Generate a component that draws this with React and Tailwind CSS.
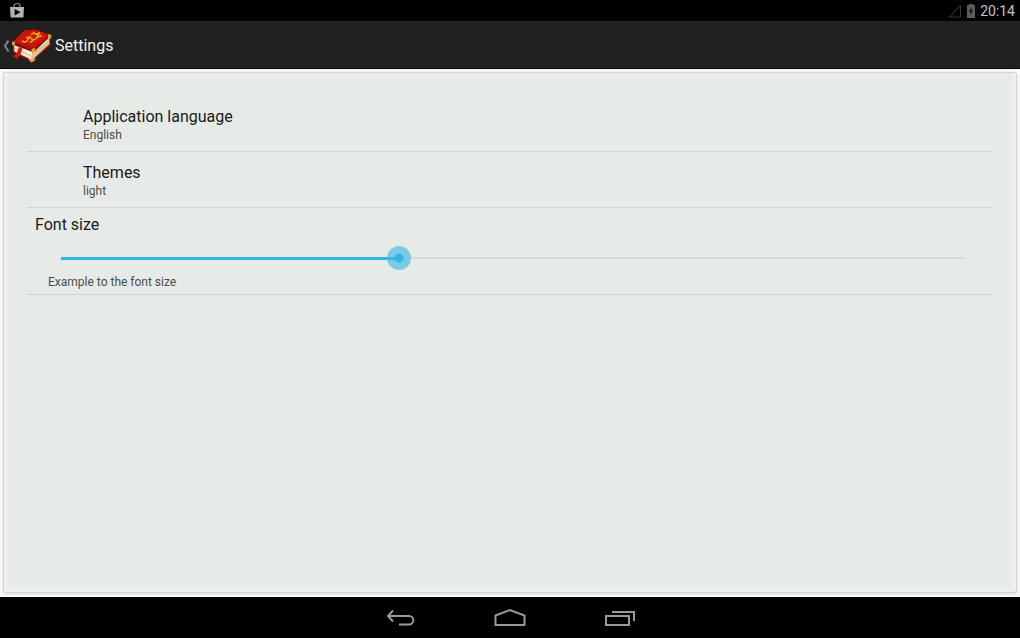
import React, { useState } from 'react';

const PREFERENCES = [
  { title: 'Application language', value: 'English' },
  { title: 'Themes', value: 'light' },
];

const FONT_STEPS = 8;

function StatusBar() {
  return (
    <div className="flex h-[21px] items-center justify-between bg-black pl-2 pr-[5px]">
      <svg width="18" height="18" viewBox="0 0 18 18" aria-hidden="true">
        <path d="M6 6V4.2C6 2.6 7.2 1.500 9 1.500s3 1.100 3 2.700V6" fill="none" stroke="#8a8a8a" strokeWidth="1.2" />
        <path d="M2 5h14l-.6 10.500H2.600z" fill="#b4b4b4" />
        <path d="M6.600 7v6.600l6-3.300z" fill="#000" />
      </svg>
      <div className="flex items-center gap-1">
        <svg width="14" height="14" viewBox="0 0 14 14" aria-hidden="true">
          <path d="M1.500 13L12.500 1.500V13z" fill="none" stroke="#3a3a3a" />
        </svg>
        <svg width="10" height="14" viewBox="0 0 10 14" aria-hidden="true">
          <path d="M3 0h4v1h2v13H1V1h2z" fill="#5a5f5c" />
          <path d="M6.400 3L2.600 7.600h2.200L3.600 11.600l4-5H5.400z" fill="#111" />
        </svg>
        <span className="text-sm leading-5 text-[#c4c4c4]">20:14</span>
      </div>
    </div>
  );
}

function BookIcon() {
  return (
    <svg width="40" height="34" viewBox="0 0 40 34" aria-hidden="true">
      {/* back cover */}
      <path d="M1 15v8.500L19.500 32.500 38.500 16.500V14z" fill="#a50f0a" />
      {/* pages */}
      <path d="M2 15.500l18.500 7.500-.5 8L2.500 22.500z" fill="#f6ecd2" />
      <path d="M20.500 22L37.500 8.500v6.500L20 31z" fill="#e6d6b0" />
      <path d="M2.500 19L20 27.500M21 25l16.500-13M21 28l16.500-14" fill="none" stroke="#b89c6c" strokeWidth=".7" />
      {/* front cover */}
      <path d="M12 1.500L23 0l16 6.200L22 23 0 15.500 1 12z" fill="#860a06" />
      <path d="M12.500 1.500L23 .5 38.500 6 21.500 20.500 1 13z" fill="#cb160e" />
      <path d="M13.500 3L23 1.800 36 6.200 21 18.500 4 12.500z" fill="none" stroke="#a50f0a" strokeWidth=".7" />
      <path d="M10 12c3 2 5 .5 6-1.500s3-2 4-.5 4 .5 5-1.500l5-2M19 6l3-2.500 2 2 4-2-3 4M14 9l4.500-1.500M18 13.500l3-2" fill="none" stroke="#e99c1c" strokeWidth="1.600" />
      {/* metal corners */}
      <path d="M36 5l3.500 1-.5 3.500-3 1zM0 12.500l3 .5-.5 4L0 16zM19.500 20l4-1-1 4.500-3-1zM16 29.500l4.500.500 3-1-1 3-3.500 1.500z" fill="#e7a12a" />
      {/* ribbon */}
      <path d="M7 18l3.500 1.500-2 5.500 1 2-3 .5-2 3-1.500-2.500-2.500-.5 4-3z" fill="#d31810" />
    </svg>
  );
}

function ActionBar() {
  return (
    <header className="flex h-12 items-center border-b border-black bg-[#212121] pt-0.5">
      <button type="button" aria-label="Navigate up" className="flex items-center gap-0.5 pl-[3px]">
        <svg width="7" height="14" viewBox="0 0 7 14" aria-hidden="true">
          <path d="M5.500 1.500L2 7l3.500 5.500" fill="none" stroke="#858585" strokeWidth="2" />
        </svg>
        <BookIcon />
      </button>
      <h1 className="pl-[3px] text-base text-[#f3f3f3]">Settings</h1>
    </header>
  );
}

function FontSizePreference() {
  const [step, setStep] = useState(3);

  return (
    <div className="border-b border-[#d2d6d3] pb-0.5">
      <label htmlFor="font-size" className="block px-2 pt-[5px] text-base leading-6 text-[#1a1a1a]">
        Font size
      </label>
      <div className="pl-[22px] pr-[18px] pt-[7px]">
        <input
          id="font-size"
          type="range"
          min="0"
          max={FONT_STEPS}
          value={step}
          onChange={e => setStep(Number(e.target.value))}
          className="block h-7 w-full cursor-pointer appearance-none bg-transparent bg-[image:linear-gradient(#33b5e5,#33b5e5),linear-gradient(#d6dad7,#d6dad7)] bg-no-repeat [background-position:12px_center,center] focus:outline-none [&::-webkit-slider-thumb]:size-6 [&::-webkit-slider-thumb]:appearance-none [&::-webkit-slider-thumb]:rounded-full [&::-webkit-slider-thumb]:bg-[radial-gradient(circle,#33b5e5_4px,#33b5e599_5px)]"
          style={{ backgroundSize: `calc((100% - 24px) * ${step / FONT_STEPS}) 3px, calc(100% - 24px) 2px` }}
        />
      </div>
      <p className="px-[21px] text-xs leading-5 text-[#4d4d4d]">Example to the font size</p>
    </div>
  );
}

function NavBar() {
  return (
    <nav className="flex h-[41px] items-center justify-center gap-[78px] bg-black pt-px">
      <button type="button" aria-label="Back">
        <svg width="32" height="20" viewBox="0 0 32 20" fill="none" stroke="#9a9a9a" strokeWidth="2" aria-hidden="true">
          <path d="M9 2.500L4 8l5 5.500M4.500 8H25a4.300 4.300 0 0 1 0 8.600H15" />
        </svg>
      </button>
      <button type="button" aria-label="Home">
        <svg width="32" height="20" viewBox="0 0 32 20" fill="none" stroke="#9a9a9a" strokeWidth="2" aria-hidden="true">
          <path d="M1.500 17V7.500L16 2l14.500 5.500V17z" />
        </svg>
      </button>
      <button type="button" aria-label="Recent apps">
        <svg width="32" height="20" viewBox="0 0 32 20" fill="none" stroke="#9a9a9a" strokeWidth="2" aria-hidden="true">
          <path d="M2 8h23v9H2zM8 4h22v9" />
        </svg>
      </button>
    </nav>
  );
}

export default function App() {
  return (
    <div className="flex min-h-screen flex-col bg-[#f7f9f8] font-[Roboto,sans-serif]">
      <StatusBar />
      <ActionBar />
      <main className="flex flex-1 flex-col px-[3px] pb-1 pt-[3px]">
        <div className="flex flex-1 flex-col rounded-xs border border-[#d3d7d4] bg-[#efefef] px-1 pb-1 shadow-sm">
          <div className="flex-1 bg-[#e7ebe8] px-[19px] pt-[23px]">
            <ul>
              {PREFERENCES.map(pref => (
                <li key={pref.title} className="border-b border-[#d2d6d3]">
                  <button type="button" className="block w-full px-14 pb-2 pt-[10px] text-left">
                    <span className="block text-base leading-[21px] text-[#1a1a1a]">{pref.title}</span>
                    <span className="block text-xs leading-4 text-[#4d4d4d]">{pref.value}</span>
                  </button>
                </li>
              ))}
            </ul>
            <FontSizePreference />
          </div>
        </div>
      </main>
      <NavBar />
    </div>
  );
}
